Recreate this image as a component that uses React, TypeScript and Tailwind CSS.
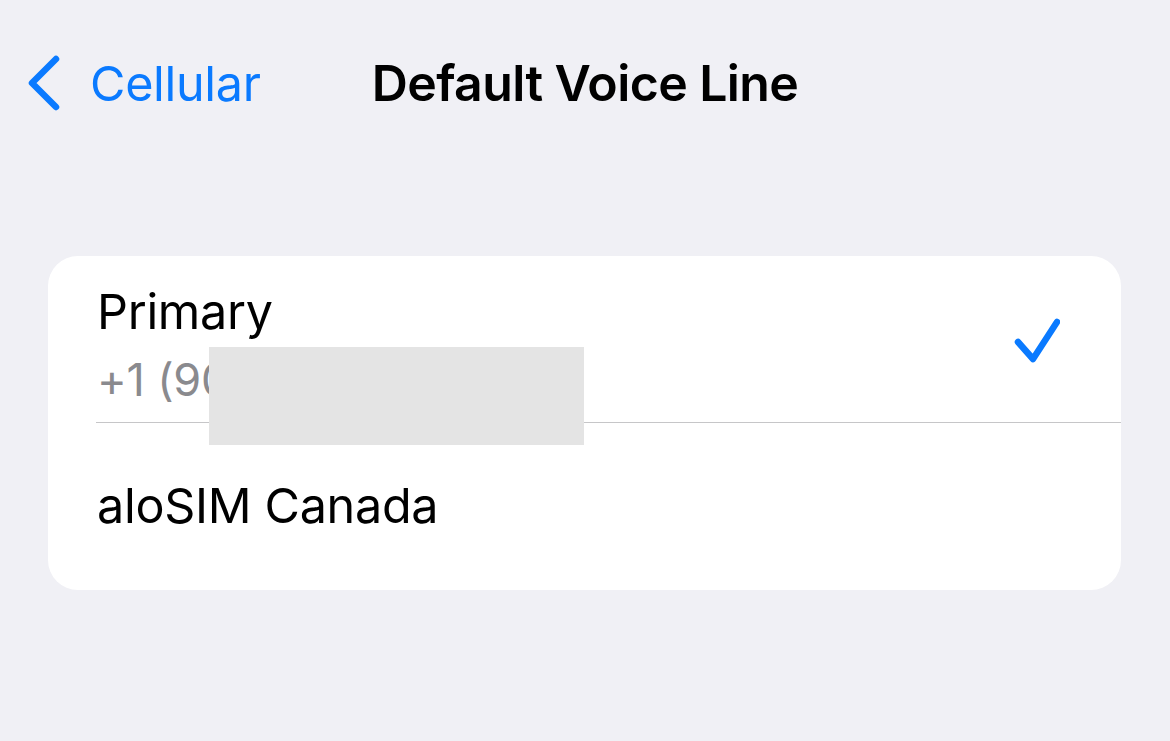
import React from 'react';

const font = { fontFamily: 'Inter, "Noto Sans", sans-serif' };

function BackChevron() {
  return (
    <svg width="40" height="60" viewBox="0 0 40 60" fill="none" className="shrink-0">
      <path d="M32 5 L8 29 L32 53" stroke="#0a7aff" strokeWidth="6.5" strokeLinecap="round" strokeLinejoin="round" />
    </svg>
  );
}

function Check() {
  return (
    <svg width="50" height="50" viewBox="0 0 50 50" fill="none" className="self-start mt-[32px] shrink-0">
      <path d="M8 27 L23 44 L47 7" stroke="#0a7aff" strokeWidth="6.5" strokeLinecap="round" strokeLinejoin="round" />
    </svg>
  );
}

export default function App() {
  return (
    <div className="w-[1170px] h-[741px] bg-[#f0f0f5] overflow-hidden" style={font}>
      {/* Nav bar */}
      <div className="relative h-[170px] flex items-start pt-[54px]">
        <div className="flex items-center pl-[24px] gap-[26px] text-[#0a7aff] text-[48.5px] leading-none tracking-[-0.3px]">
          <BackChevron />
          <span>Cellular</span>
        </div>
        <div className="absolute left-0 right-0 top-[58px] flex justify-center">
          <span className="text-[50px] font-semibold leading-none tracking-[-0.6px] text-black">Default Voice Line</span>
        </div>
      </div>

      {/* List */}
      <div className="relative mx-[48px] mt-[86px] w-[1073px] bg-white rounded-[30px]">
        <div className="flex items-start justify-between pl-[49px] pr-[61px] h-[166px] pt-[27px]">
          <div className="flex flex-col">
            <span className="text-[48.5px] leading-[58px] text-black tracking-[-0.3px]">Primary</span>
            <span className="mt-[12px] text-[45px] leading-[54px] text-[#8a8a8e] tracking-[-0.2px]">+1 (90</span>
          </div>
          <Check />
        </div>
        <div className="ml-[48px] h-px bg-[#c6c6c8]" />
        <div className="flex items-center pl-[49px] h-[167px]">
          <span className="text-[48.5px] leading-none text-black tracking-[-0.3px]">aloSIM Canada</span>
        </div>
        {/* redaction block */}
        <div className="absolute left-[161px] top-[91px] w-[375px] h-[98px] bg-[#e4e4e4]" />
      </div>
    </div>
  );
}
